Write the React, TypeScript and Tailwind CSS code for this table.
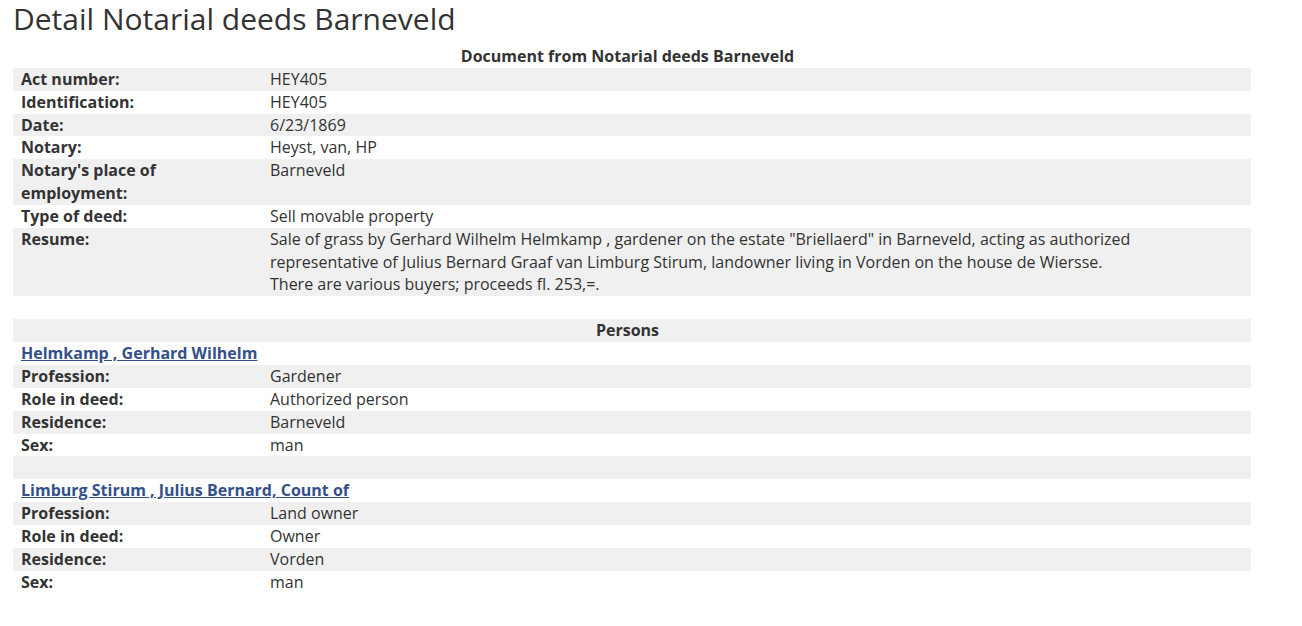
import React from "react";

type Row = { label?: string; value?: React.ReactNode; gray: boolean; link?: string; empty?: boolean };

const docRows: Row[] = [
  { label: "Act number:", value: "HEY405", gray: true },
  { label: "Identification:", value: "HEY405", gray: false },
  { label: "Date:", value: "6/23/1869", gray: true },
  { label: "Notary:", value: "Heyst, van, HP", gray: false },
  { label: "Notary's place of employment:", value: "Barneveld", gray: true },
  { label: "Type of deed:", value: "Sell movable property", gray: false },
  {
    label: "Resume:",
    value: (
      <>
        Sale of grass by Gerhard Wilhelm Helmkamp , gardener on the estate "Briellaerd" in Barneveld, acting as authorized
        <br />
        representative of Julius Bernard Graaf van Limburg Stirum, landowner living in Vorden on the house de Wiersse.
        <br />
        There are various buyers; proceeds fl. 253,=.
      </>
    ),
    gray: true,
  },
];

const personRows: Row[] = [
  { link: "Helmkamp , Gerhard Wilhelm", gray: false },
  { label: "Profession:", value: "Gardener", gray: true },
  { label: "Role in deed:", value: "Authorized person", gray: false },
  { label: "Residence:", value: "Barneveld", gray: true },
  { label: "Sex:", value: "man", gray: false },
  { empty: true, gray: true },
  { link: "Limburg Stirum , Julius Bernard, Count of", gray: false },
  { label: "Profession:", value: "Land owner", gray: true },
  { label: "Role in deed:", value: "Owner", gray: false },
  { label: "Residence:", value: "Vorden", gray: true },
  { label: "Sex:", value: "man", gray: false },
];

function RowView({ r }: { r: Row }) {
  const bg = r.gray ? "bg-[#f0f0f0]" : "bg-white";
  if (r.empty) return <div className={`${bg} h-[23px]`} />;
  if (r.link)
    return (
      <div className={`${bg} px-2`}>
        <a href="#" className="font-bold text-[#34508a] underline">
          {r.link}
        </a>
      </div>
    );
  return (
    <div className={`${bg} flex`}>
      <div className="w-[249px] shrink-0 px-2 font-bold">{r.label}</div>
      <div className="flex-1 px-2">{r.value}</div>
    </div>
  );
}

export default function App() {
  return (
    <div
      className="min-h-[626px] bg-white px-[13px] pt-[2px] text-[16px] leading-[1.42857] text-[#333]"
      style={{ fontFamily: '"Open Sans", "Noto Sans", sans-serif' }}
    >
      <h1 className="text-[30px] leading-[1.1] font-normal mb-[10px]">Detail Notarial deeds Barneveld</h1>
      <div className="w-[1238px]">
        <div className="bg-white text-center font-bold pr-[9px]">Document from Notarial deeds Barneveld</div>
        {docRows.map((r, i) => (
          <RowView key={i} r={r} />
        ))}
        <div className="h-[23px]" />
        <div className="bg-[#f0f0f0] text-center font-bold pr-[9px]">Persons</div>
        {personRows.map((r, i) => (
          <RowView key={i} r={r} />
        ))}
      </div>
    </div>
  );
}
